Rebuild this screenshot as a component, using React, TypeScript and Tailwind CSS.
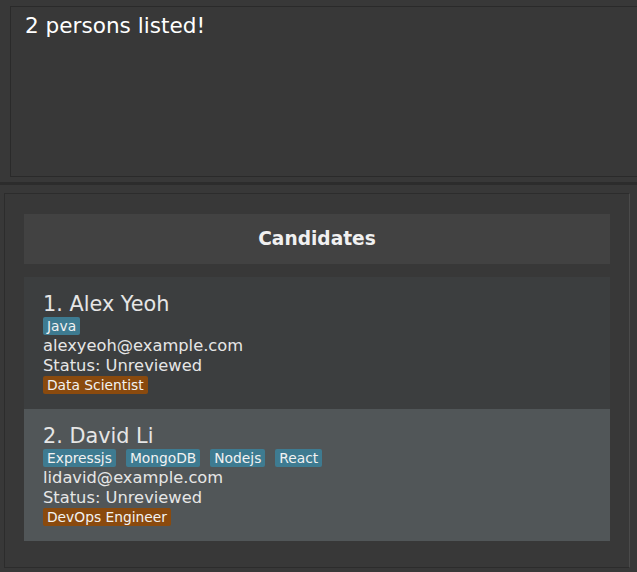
const font = { fontFamily: '"DejaVu Sans", "Noto Sans", sans-serif' };

type Person = {
  name: string;
  tags: string[];
  email: string;
  status: string;
  role: string;
};

const people: Person[] = [
  { name: "Alex Yeoh", tags: ["Java"], email: "alexyeoh@example.com", status: "Unreviewed", role: "Data Scientist" },
  {
    name: "David Li",
    tags: ["Expressjs", "MongoDB", "Nodejs", "React"],
    email: "lidavid@example.com",
    status: "Unreviewed",
    role: "DevOps Engineer",
  },
];

function Card({ p, index }: { p: Person; index: number }) {
  const bg = index % 2 === 0 ? "bg-[#3c3e3f]" : "bg-[#515658]";
  return (
    <div className={`${bg} h-[132px] pl-[19px] pt-[15px] text-[#e6e6e6]`}>
      <div className="text-[20.8px] leading-[24px]">
        {index + 1}. {p.name}
      </div>
      <div className="flex gap-[10px] mt-[1px]">
        {p.tags.map((t) => (
          <span key={t} className="bg-[#3e7b91] text-[#f2f2f2] text-[13.8px] leading-[18px] px-[4px] rounded-[2px]">
            {t}
          </span>
        ))}
      </div>
      <div className="text-[16.3px] leading-[20px] mt-[1px]">{p.email}</div>
      <div className="text-[16.3px] leading-[20px]">Status: {p.status}</div>
      <div className="flex">
        <span className="bg-[#8a4a0e] text-[#f2f2f2] text-[13.8px] leading-[18px] px-[4px] rounded-[2px]">{p.role}</span>
      </div>
    </div>
  );
}

export default function App() {
  return (
    <div style={font} className="w-[637px] h-[572px] bg-[#383838] overflow-hidden flex flex-col">
      {/* result display */}
      <div className="pl-[10px] pt-[6px]">
        <div className="h-[171px] w-[640px] border border-[#2a2a2a] bg-[#383838] pl-[14px] pt-[6px]">
          <p className="text-white text-[21.6px] leading-[26px]">2 persons listed!</p>
        </div>
      </div>

      <div className="mt-[5px] h-[3px] bg-[#2c2c2c]" />

      {/* list panel */}
      <div className="pl-[4px] pt-[8px] pr-[7px]">
        <div className="h-[375px] border border-[#2c2c2c] border-r-[#4a4a4a] bg-[#383838] pl-[19px] pr-[19px] pt-[20px]">
          <div className="h-[50px] bg-[#424242] flex items-center justify-center">
            <span className="text-[#f0f0f0] text-[18.6px] font-bold">Candidates</span>
          </div>
          <div className="mt-[13px] flex flex-col">
            {people.map((p, i) => (
              <Card key={p.name} p={p} index={i} />
            ))}
          </div>
        </div>
      </div>
    </div>
  );
}
